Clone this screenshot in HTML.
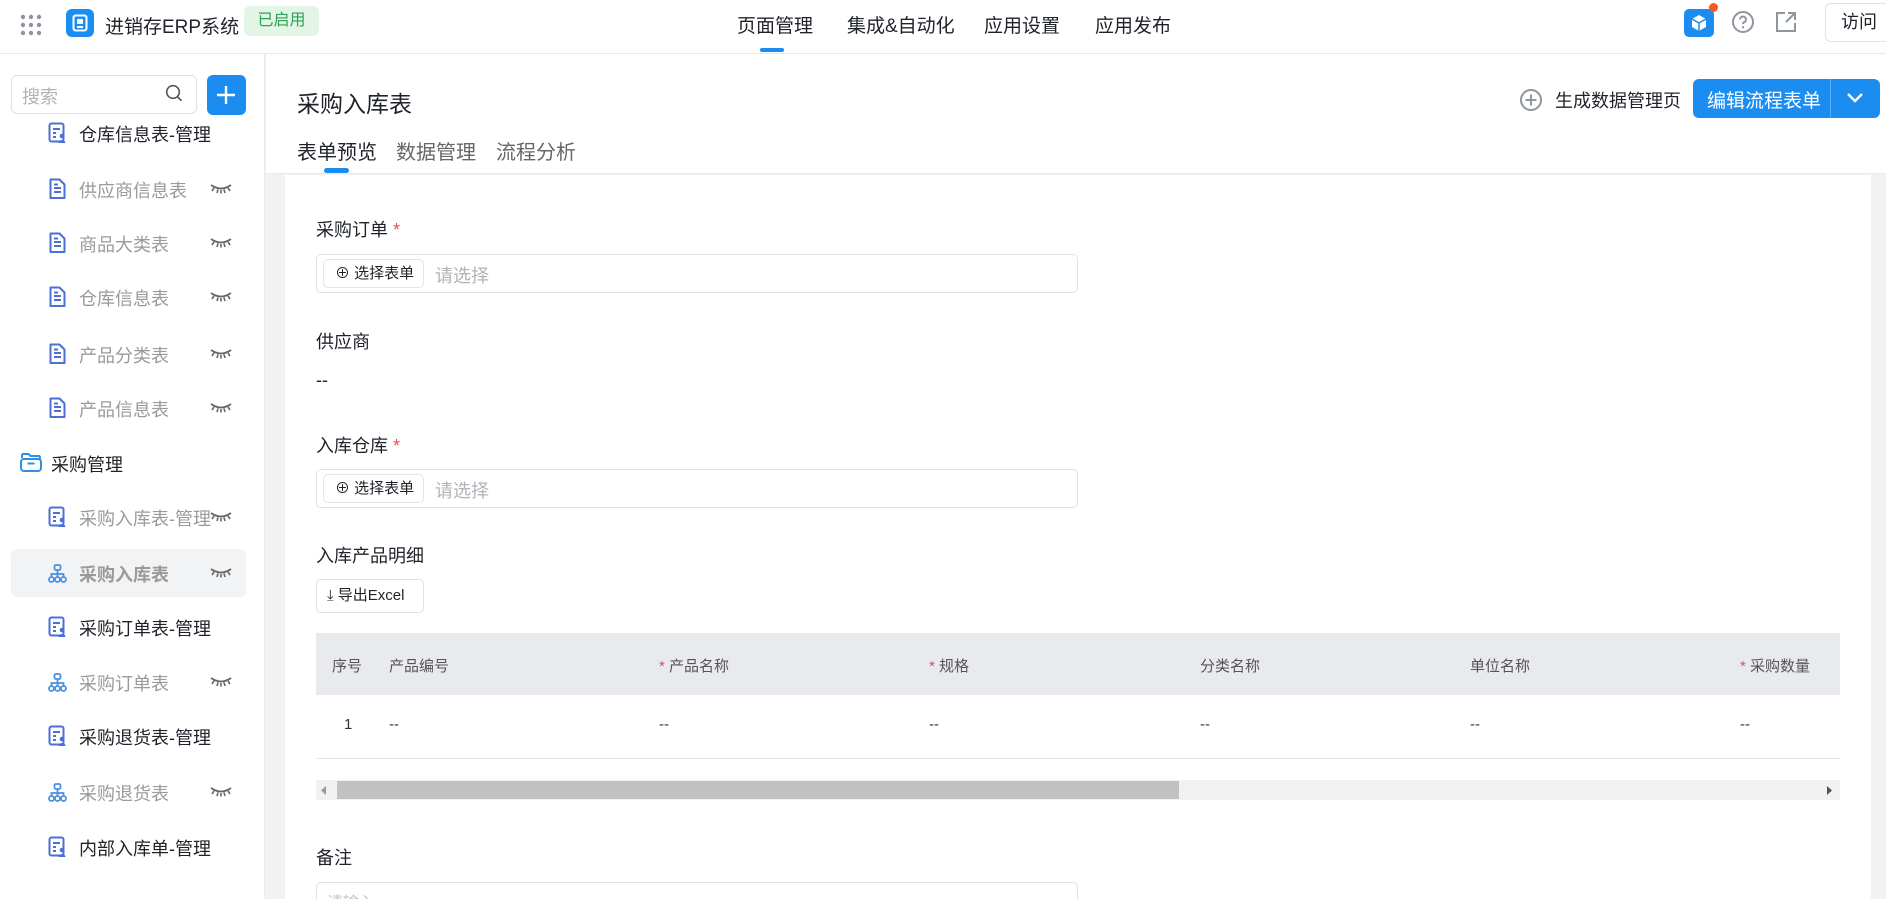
<!DOCTYPE html>
<html style="width:1886px;height:899px;overflow:hidden"><head><meta charset="utf-8">
<style>
*{box-sizing:border-box;margin:0;padding:0}
body{width:1886px;height:899px;overflow:hidden;background:#f1f2f4;font-family:"Liberation Sans","Noto Sans CJK SC",sans-serif;color:#1f2329;position:relative}
.a{position:absolute;white-space:nowrap}
#top{position:absolute;left:0;top:0;width:1886px;height:54px;background:#fff;border-bottom:1px solid #e8e9eb}
#side{position:absolute;left:0;top:54px;width:265px;bottom:0;background:#fff;border-right:1px solid #e8e9eb}
#hdr{position:absolute;left:266px;top:54px;width:1620px;height:120px;background:#fff;border-bottom:1px solid #e8e9eb}
#card{position:absolute;left:285px;top:175px;width:1586px;bottom:0;background:#fff}
.nav{font-size:19px;color:#1f2329;top:11px}
.it{font-size:18px;left:79px}
.gray{color:#9a9a9a}
.ico{position:absolute;left:48px;width:19px;height:22px}
.eye{position:absolute;left:210px;width:22px;height:12px}
.lbl{font-size:18px;color:#1f2329}
.req{color:#e34d59}
.inp{position:absolute;border:1px solid #dfe1e5;border-radius:5px;background:#fff;overflow:hidden}
.sel{position:absolute;left:6px;top:4px;height:29px;width:101px;border:1px solid #e3e5e8;border-radius:5px;font-size:15px;line-height:27px;padding-left:11px;color:#1f2329}
.th{font-size:15px;color:#555;top:655px}
.td{font-size:15px;color:#333;top:716px}
</style></head><body>
<div id="top">
  <svg class="a" style="left:20px;top:14px" width="22" height="22" viewBox="0 0 22 22"><g fill="#8f959e"><circle cx="3" cy="3" r="2.2"/><circle cx="11" cy="3" r="2.2"/><circle cx="19" cy="3" r="2.2"/><circle cx="3" cy="11" r="2.2"/><circle cx="11" cy="11" r="2.2"/><circle cx="19" cy="11" r="2.2"/><circle cx="3" cy="19" r="2.2"/><circle cx="11" cy="19" r="2.2"/><circle cx="19" cy="19" r="2.2"/></g></svg>
  <div class="a" style="left:66px;top:9px;width:28px;height:28px;background:#1b8cf0;border-radius:6px"></div>
  <svg class="a" style="left:72px;top:14px" width="16" height="18" viewBox="0 0 16 18"><rect x="1.5" y="1.5" width="13" height="15" rx="2" fill="none" stroke="#fff" stroke-width="2"/><rect x="5" y="5" width="6" height="5" fill="#fff"/><rect x="5" y="12" width="6" height="2" fill="#fff"/></svg>
  <div class="a" style="left:105px;top:12px;font-size:19px">进销存ERP系统</div>
  <div class="a" style="left:244px;top:6px;width:75px;height:30px;background:#e2f5e7;border-radius:6px;color:#2ea154;font-size:16px;line-height:30px;text-align:center">已启用</div>
  <div class="a nav" style="left:737px">页面管理</div>
  <div class="a" style="left:760px;top:48px;width:24px;height:4px;background:#1b8cf0;border-radius:2px"></div>
  <div class="a nav" style="left:847px">集成&amp;自动化</div>
  <div class="a nav" style="left:984px">应用设置</div>
  <div class="a nav" style="left:1095px">应用发布</div>
  <div class="a" style="left:1684px;top:9px;width:30px;height:28px;background:#1b8cf0;border-radius:5px"></div>
  <svg class="a" style="left:1690px;top:13px" width="18" height="20" viewBox="0 0 18 20"><path d="M9 2l7 4v8l-7 4-7-4V6z" fill="#fff"/><path d="M9 10l7-4M9 10v8M9 10L2 6" stroke="#1b8cf0" stroke-width="1.5" fill="none"/></svg>
  <div class="a" style="left:1709px;top:3px;width:9px;height:9px;background:#f15a24;border-radius:50%"></div>
  <svg class="a" style="left:1731px;top:10px" width="24" height="24" viewBox="0 0 24 24"><circle cx="12" cy="12" r="10" fill="none" stroke="#8f959e" stroke-width="2"/><path d="M9 9.5a3 3 0 1 1 4 2.8c-.8.4-1 1-1 1.8" fill="none" stroke="#8f959e" stroke-width="2"/><circle cx="12" cy="17.3" r="1.2" fill="#8f959e"/></svg>
  <svg class="a" style="left:1775px;top:11px" width="22" height="22" viewBox="0 0 22 22"><path d="M10 2H2v18h18v-8" fill="none" stroke="#8f959e" stroke-width="2"/><path d="M13 2h7v7M20 2l-9 9" fill="none" stroke="#8f959e" stroke-width="2"/></svg>
  <div class="a" style="left:1825px;top:3px;width:70px;height:39px;border:1px solid #dfe1e5;border-radius:6px;font-size:18px;line-height:37px;padding-left:15px">访问</div>
</div>

<div id="side">
  <div class="a" style="left:11px;top:21px;width:186px;height:39px;border:1px solid #dfe1e5;border-radius:6px"></div>
  <div class="a" style="left:22px;top:29px;font-size:18px;color:#b0b3b8">搜索</div>
  <svg class="a" style="left:165px;top:30px" width="18" height="19" viewBox="0 0 18 19"><circle cx="8" cy="8" r="6.3" fill="none" stroke="#555" stroke-width="1.6"/><path d="M12.5 12.8l4 4" stroke="#555" stroke-width="1.6"/></svg>
  <div class="a" style="left:207px;top:21px;width:39px;height:40px;background:#1b8cf0;border-radius:6px"></div>
  <svg class="a" style="left:216px;top:31px" width="20" height="20" viewBox="0 0 20 20"><path d="M10 1v18M1 10h18" stroke="#fff" stroke-width="2.4"/></svg>
  <div class="a" style="left:11px;top:495px;width:235px;height:48px;background:#f2f3f5;border-radius:6px"></div>
</div>

<div id="hdr">
  <div class="a" style="left:31px;top:31px;font-size:23px">采购入库表</div>
  <div class="a" style="left:31px;top:82px;font-size:20px">表单预览</div>
  <div class="a" style="left:130px;top:82px;font-size:20px;color:#666">数据管理</div>
  <div class="a" style="left:230px;top:82px;font-size:20px;color:#666">流程分析</div>
  <div class="a" style="left:58px;top:114px;width:25px;height:5px;background:#1b8cf0;border-radius:3px"></div>
  <svg class="a" style="left:1253px;top:34px" width="24" height="24" viewBox="0 0 24 24"><circle cx="12" cy="12" r="10" fill="none" stroke="#8f959e" stroke-width="2"/><path d="M12 6.5v11M6.5 12h11" stroke="#8f959e" stroke-width="2"/></svg>
  <div class="a" style="left:1289px;top:33px;font-size:18px">生成数据管理页</div>
  <div class="a" style="left:1427px;top:25px;width:187px;height:39px;background:#1b8cf0;border-radius:6px"></div>
  <div class="a" style="left:1441px;top:32px;font-size:19px;color:#fff">编辑流程表单</div>
  <div class="a" style="left:1564px;top:25px;width:1px;height:39px;background:#5aaef5"></div>
  <svg class="a" style="left:1580px;top:38px" width="18" height="12" viewBox="0 0 18 12"><path d="M2 2l7 7 7-7" fill="none" stroke="#fff" stroke-width="2.4"/></svg>
</div>

<div id="card"></div>

<svg width="0" height="0" style="position:absolute"><defs>
<symbol id="mg" viewBox="0 0 19 22"><rect x="1.5" y="1.5" width="14" height="18" rx="2" fill="none" stroke="#4b6fd6" stroke-width="2"/><path d="M5 7h7M5 11h3M5 15h3" stroke="#4b6fd6" stroke-width="2"/><circle cx="14" cy="14" r="2.3" fill="#4b6fd6"/><path d="M10.5 21a3.5 3 0 0 1 7 0z" fill="#4b6fd6"/></symbol>
<symbol id="doc" viewBox="0 0 19 22"><path d="M2.5 1.5h9l5 5v13.5h-14z" fill="none" stroke="#4b6fd6" stroke-width="2" stroke-linejoin="round"/><path d="M6 10h7M6 14h7M6 6.5h4" stroke="#4b6fd6" stroke-width="2"/></symbol>
<symbol id="flow" viewBox="0 0 19 22"><rect x="6.5" y="3" width="6" height="5" rx="1.5" fill="none" stroke="#4b8fe0" stroke-width="1.8"/><path d="M9.5 8v4M3.5 15v-3h12v3M9.5 12v3" fill="none" stroke="#4b8fe0" stroke-width="1.8"/><circle cx="3.5" cy="17.5" r="2.5" fill="none" stroke="#4b8fe0" stroke-width="1.8"/><circle cx="9.5" cy="17.5" r="2.5" fill="none" stroke="#4b8fe0" stroke-width="1.8"/><circle cx="15.5" cy="17.5" r="2.5" fill="none" stroke="#4b8fe0" stroke-width="1.8"/></symbol>
<symbol id="eye" viewBox="0 0 22 12"><path d="M1 2q10 7 20 0" fill="none" stroke="#666" stroke-width="1.8"/><path d="M4 5l-2 3M8 6.5l-1 3.5M11 7v3.5M14 6.5l1 3.5M18 5l2 3" stroke="#666" stroke-width="1.6"/></symbol>
</defs></svg>

<svg class="ico" style="top:122px"><use href="#mg"/></svg><div class="a it" style="top:121px">仓库信息表-管理</div>
<svg class="ico" style="top:178px"><use href="#doc"/></svg><div class="a it gray" style="top:177px">供应商信息表</div><svg class="eye" style="top:183px"><use href="#eye"/></svg>
<svg class="ico" style="top:232px"><use href="#doc"/></svg><div class="a it gray" style="top:231px">商品大类表</div><svg class="eye" style="top:237px"><use href="#eye"/></svg>
<svg class="ico" style="top:286px"><use href="#doc"/></svg><div class="a it gray" style="top:285px">仓库信息表</div><svg class="eye" style="top:291px"><use href="#eye"/></svg>
<svg class="ico" style="top:343px"><use href="#doc"/></svg><div class="a it gray" style="top:342px">产品分类表</div><svg class="eye" style="top:348px"><use href="#eye"/></svg>
<svg class="ico" style="top:397px"><use href="#doc"/></svg><div class="a it gray" style="top:396px">产品信息表</div><svg class="eye" style="top:402px"><use href="#eye"/></svg>
<svg class="a" style="left:19px;top:452px" width="24" height="21" viewBox="0 0 24 21"><path d="M3 6V3.5Q3 2 4.5 2h5l2 2h8Q21 4 21 5.5V7" fill="none" stroke="#2f8fe6" stroke-width="2"/><rect x="2" y="7" width="20" height="12" rx="3" fill="none" stroke="#2f8fe6" stroke-width="2"/><path d="M8.5 11.5h7" stroke="#2f8fe6" stroke-width="2"/></svg>
<div class="a" style="left:51px;top:451px;font-size:18px">采购管理</div>
<svg class="ico" style="top:506px"><use href="#mg"/></svg><div class="a it gray" style="top:505px">采购入库表-管理</div><svg class="eye" style="top:511px"><use href="#eye"/></svg>
<svg class="ico" style="top:562px"><use href="#flow"/></svg><div class="a it" style="top:561px;font-weight:bold;color:#9a9a9a">采购入库表</div><svg class="eye" style="top:567px"><use href="#eye"/></svg>
<svg class="ico" style="top:616px"><use href="#mg"/></svg><div class="a it" style="top:615px">采购订单表-管理</div>
<svg class="ico" style="top:671px"><use href="#flow"/></svg><div class="a it gray" style="top:670px">采购订单表</div><svg class="eye" style="top:676px"><use href="#eye"/></svg>
<svg class="ico" style="top:725px"><use href="#mg"/></svg><div class="a it" style="top:724px">采购退货表-管理</div>
<svg class="ico" style="top:781px"><use href="#flow"/></svg><div class="a it gray" style="top:780px">采购退货表</div><svg class="eye" style="top:786px"><use href="#eye"/></svg>
<svg class="ico" style="top:836px"><use href="#mg"/></svg><div class="a it" style="top:835px">内部入库单-管理</div>

<div class="a lbl" style="left:316px;top:216px">采购订单 <span class="req">*</span></div>
<div class="inp" style="left:316px;top:254px;width:762px;height:39px"><div class="sel">⊕ 选择表单</div><div class="a" style="left:118px;top:7px;font-size:18px;color:#b0b3b8">请选择</div></div>
<div class="a lbl" style="left:316px;top:328px">供应商</div>
<div class="a lbl" style="left:316px;top:370px">--</div>
<div class="a lbl" style="left:316px;top:432px">入库仓库 <span class="req">*</span></div>
<div class="inp" style="left:316px;top:469px;width:762px;height:39px"><div class="sel">⊕ 选择表单</div><div class="a" style="left:118px;top:7px;font-size:18px;color:#b0b3b8">请选择</div></div>
<div class="a lbl" style="left:316px;top:542px">入库产品明细</div>
<div class="a" style="left:316px;top:579px;width:108px;height:34px;border:1px solid #dfe1e5;border-radius:5px;font-size:15px;line-height:32px;padding-left:10px">⤓ 导出Excel</div>

<div class="a" style="left:316px;top:633px;width:1524px;height:62px;background:#e9eaed"></div>
<div class="a th" style="left:332px">序号</div>
<div class="a th" style="left:389px">产品编号</div>
<div class="a th" style="left:659px"><span class="req">*</span> 产品名称</div>
<div class="a th" style="left:929px"><span class="req">*</span> 规格</div>
<div class="a th" style="left:1200px">分类名称</div>
<div class="a th" style="left:1470px">单位名称</div>
<div class="a th" style="left:1740px"><span class="req">*</span> 采购数量</div>
<div class="a" style="left:316px;top:758px;width:1524px;height:1px;background:#e5e6e8"></div>
<div class="a td" style="left:344px">1</div>
<div class="a td" style="left:389px">--</div>
<div class="a td" style="left:659px">--</div>
<div class="a td" style="left:929px">--</div>
<div class="a td" style="left:1200px">--</div>
<div class="a td" style="left:1470px">--</div>
<div class="a td" style="left:1740px">--</div>
<div class="a" style="left:316px;top:780px;width:1524px;height:20px;background:#f1f1f1"></div>
<div class="a" style="left:337px;top:781px;width:842px;height:18px;background:#c1c1c1"></div>
<svg class="a" style="left:321px;top:786px" width="6" height="9"><path d="M5 0v9L0 4.5z" fill="#999"/></svg>
<svg class="a" style="left:1827px;top:786px" width="6" height="9"><path d="M0 0v9l5-4.5z" fill="#555"/></svg>
<div class="a lbl" style="left:316px;top:844px">备注</div>
<div class="inp" style="left:316px;top:882px;width:762px;height:40px"><div class="a" style="left:10px;top:6px;font-size:16px;color:#c0c3c8">请输入</div></div>
</body></html>
